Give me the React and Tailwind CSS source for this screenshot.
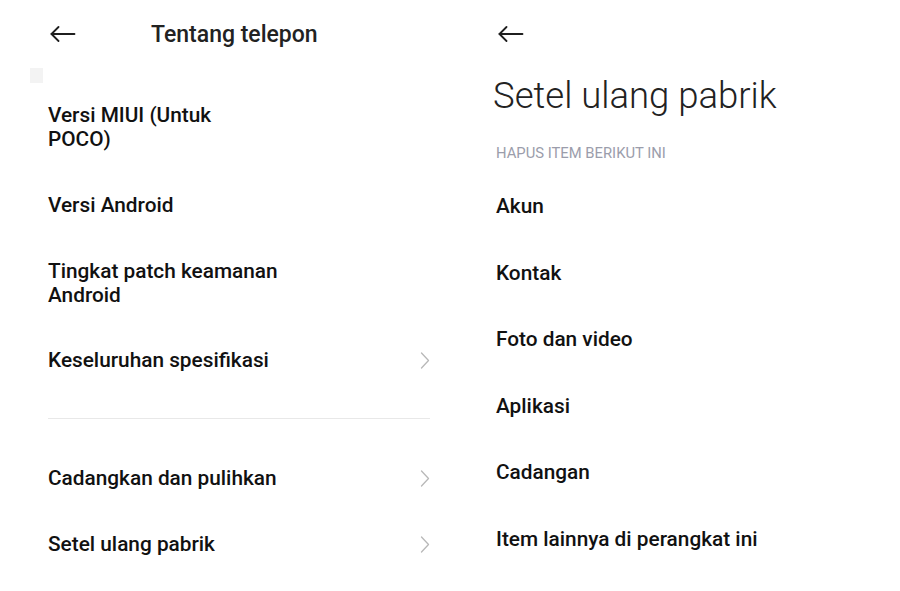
const BackArrow = () => (
  <svg width="26" height="16" viewBox="0 0 26 16" fill="none" stroke="#1f1f1f" strokeWidth="1.8" strokeLinecap="round" strokeLinejoin="round">
    <path d="M1.5 8H24.5" />
    <path d="M8.5 1L1.5 8L8.5 15" />
  </svg>
);

const Chevron = () => (
  <svg width="10" height="17" viewBox="0 0 10 17" fill="none" stroke="#b8b8b8" strokeWidth="1.3" strokeLinecap="round" strokeLinejoin="round">
    <path d="M1.5 1L8.5 8.5L1.5 16" />
  </svg>
);

function Row({ label, second, h = "h-[66px]", chevron }) {
  return (
    <div className={`flex items-center justify-between pl-[48px] pr-[20px] ${h}`}>
      <span className="text-[20.8px] leading-[24px] font-medium text-[#111]">
        {label}
        {second && (
          <>
            <br />
            {second}
          </>
        )}
      </span>
      {chevron && <Chevron />}
    </div>
  );
}

const leftTop = [
  { label: "Versi MIUI (Untuk", second: "POCO)", h: "h-[88px]" },
  { label: "Versi Android", h: "h-[68px]" },
  { label: "Tingkat patch keamanan", second: "Android", h: "h-[88px]" },
  { label: "Keseluruhan spesifikasi", chevron: true },
];

const rightItems = ["Akun", "Kontak", "Foto dan video", "Aplikasi", "Cadangan", "Item lainnya di perangkat ini"];

export default function App() {
  return (
    <div className="flex h-[591px] w-[900px] bg-white" style={{ fontFamily: "Roboto, 'Noto Sans', sans-serif" }}>
      <section className="w-[450px]">
        <div className="flex h-[68px] items-center pl-[50px]">
          <BackArrow />
          <h1 className="ml-[75px] pt-[3px] text-[23px] font-medium text-[#222]">Tentang telepon</h1>
        </div>
        <div className="ml-[30px] h-[15px] w-[13px] bg-[#f3f3f3]" />
        {leftTop.map((item) => (
          <Row key={item.label} {...item} />
        ))}
        <div className="pt-[25px] pb-[26px] pl-[48px] pr-[20px]">
          <div className="h-px bg-[#e8e8e8]" />
        </div>
        <Row label="Cadangkan dan pulihkan" chevron />
        <Row label="Setel ulang pabrik" chevron />
      </section>

      <section className="w-[450px]">
        <div className="flex h-[68px] items-center pl-[48px]">
          <BackArrow />
        </div>
        <h2 className="mt-[6px] pl-[43px] text-[36.5px] leading-[44px] font-light text-[#222]">Setel ulang pabrik</h2>
        <p className="mt-[25px] pl-[46px] text-[14.8px] leading-[20px] text-[#9b9dab]">HAPUS ITEM BERIKUT INI</p>
        <div className="mt-[10px]">
          {rightItems.map((item) => (
            <div key={item} className="flex h-[66.5px] items-center pl-[46px]">
              <span className="text-[20.8px] leading-[24px] font-medium text-[#111]">{item}</span>
            </div>
          ))}
        </div>
      </section>
    </div>
  );
}
